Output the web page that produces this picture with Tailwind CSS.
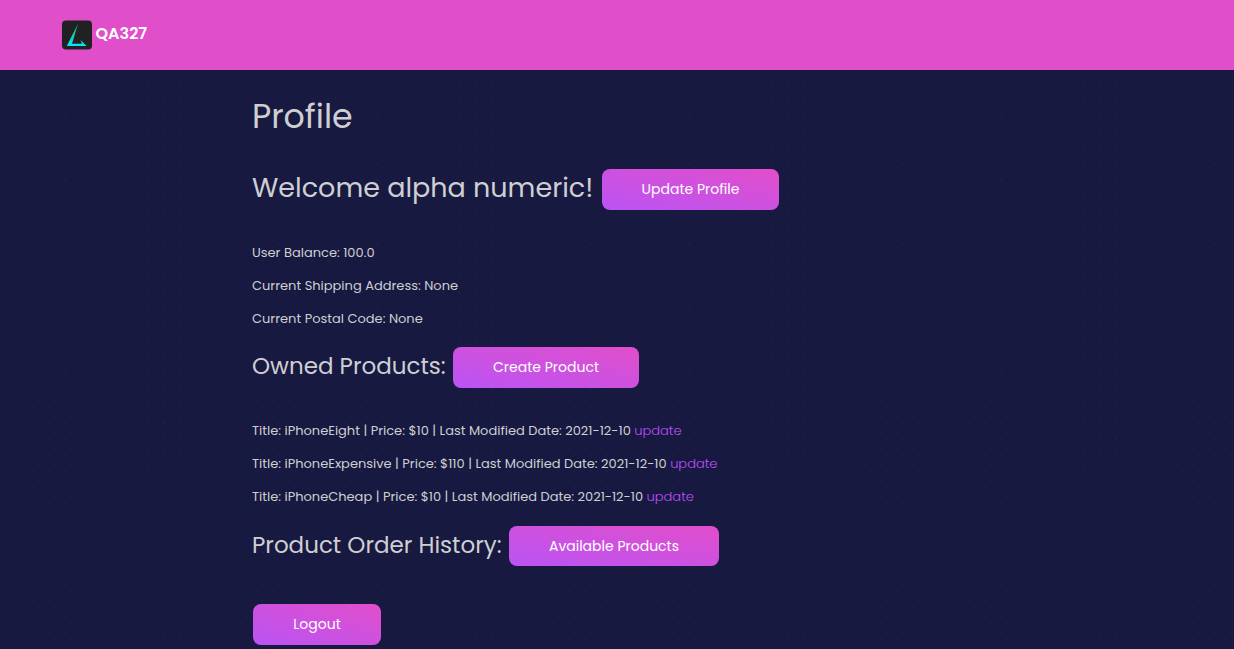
<!DOCTYPE html>
<html lang="en">
<head>
<meta charset="utf-8">
<title>Profile</title>
<script src="https://cdn.jsdelivr.net/npm/@tailwindcss/browser@4"></script>
</head>
<body class="h-[649px] overflow-hidden bg-[#171941] bg-[radial-gradient(circle_at_center,#1f2147_0.4px,transparent_1.4px)] bg-[size:16.43px_16.2px] bg-position-[8px_9.8px] font-['Poppins','Inter',sans-serif] text-[13px] text-[#cfcfd2]">
<header class="flex h-[70px] items-start bg-[#e14eca] pl-[62px] pt-5">
  <a class="flex items-start gap-[3.5px] text-white" href="#">
    <svg class="h-[30px] w-[30px]" viewBox="0 0 30 30">
      <defs><linearGradient id="mark" x1="0" y1="0" x2="0" y2="1"><stop offset="0" stop-color="#128a70"/><stop offset="0.5" stop-color="#14cfae"/><stop offset="1" stop-color="#08e5f5"/></linearGradient></defs>
      <rect y="0.5" width="30" height="29" rx="4" fill="#212124"/>
      <path d="M16.300 3L4.800 26H24.600L18.500 20L20 23.700H10Z" fill="url(#mark)"/>
    </svg>
    <span class="mt-px h-[26px] whitespace-nowrap text-[16px] leading-[26px] font-semibold">QA327</span>
  </a>
</header>
<main class="flex flex-col items-start pl-[252px] whitespace-nowrap">
  <h1 class="mt-[23px] h-[48px] text-[33.2px] leading-[48px]">Profile</h1>
  <div class="mt-[28px] flex h-[41px] items-center">
    <h2 class="w-[350px] pb-1 text-[27px] leading-[38px]">Welcome alpha numeric!</h2>
    <a class="flex h-[41px] w-[177px] items-center justify-center rounded-lg bg-linear-[to_top_right,#ba54f5,#e14eca] text-[14px] text-white" href="#">Update Profile</a>
  </div>
  <p class="mt-[33px] h-[20px] leading-[20px]">User Balance: 100.0</p>
  <p class="mt-[13px] h-[20px] leading-[20px]">Current Shipping Address: None</p>
  <p class="mt-[13px] h-[20px] leading-[20px]">Current Postal Code: None</p>
  <div class="mt-[18px] flex h-[41px] items-center">
    <h3 class="w-[201px] pb-1 text-[23px] leading-[38px]">Owned Products:</h3>
    <a class="flex h-[41px] w-[186px] items-center justify-center rounded-lg bg-linear-[to_top_right,#ba54f5,#e14eca] text-[14px] text-white" href="#">Create Product</a>
  </div>
  <p class="mt-[33px] h-[20px] leading-[20px]"><span>Title: iPhoneEight | Price: $10 | Last Modified Date: 2021-12-10</span> <a class="font-light text-[#c050ff]" href="#">update</a></p>
  <p class="mt-[13px] h-[20px] leading-[20px]"><span>Title: iPhoneExpensive | Price: $110 | Last Modified Date: 2021-12-10</span> <a class="font-light text-[#c050ff]" href="#">update</a></p>
  <p class="mt-[13px] h-[20px] leading-[20px]"><span>Title: iPhoneCheap | Price: $10 | Last Modified Date: 2021-12-10</span> <a class="font-light text-[#c050ff]" href="#">update</a></p>
  <div class="mt-[19px] flex h-[40px] items-center">
    <h3 class="w-[257px] pb-0.5 text-[23px] leading-[38px]">Product Order History:</h3>
    <a class="flex h-[40px] w-[210px] items-center justify-center rounded-lg bg-linear-[to_top_right,#ba54f5,#e14eca] text-[14px] text-white" href="#">Available Products</a>
  </div>
  <a class="mt-[38px] ml-px flex h-[41px] w-[128px] items-center justify-center rounded-lg bg-linear-[to_top_right,#ba54f5,#e14eca] text-[14px] text-white" href="#">Logout</a>
</main>
</body>
</html>
